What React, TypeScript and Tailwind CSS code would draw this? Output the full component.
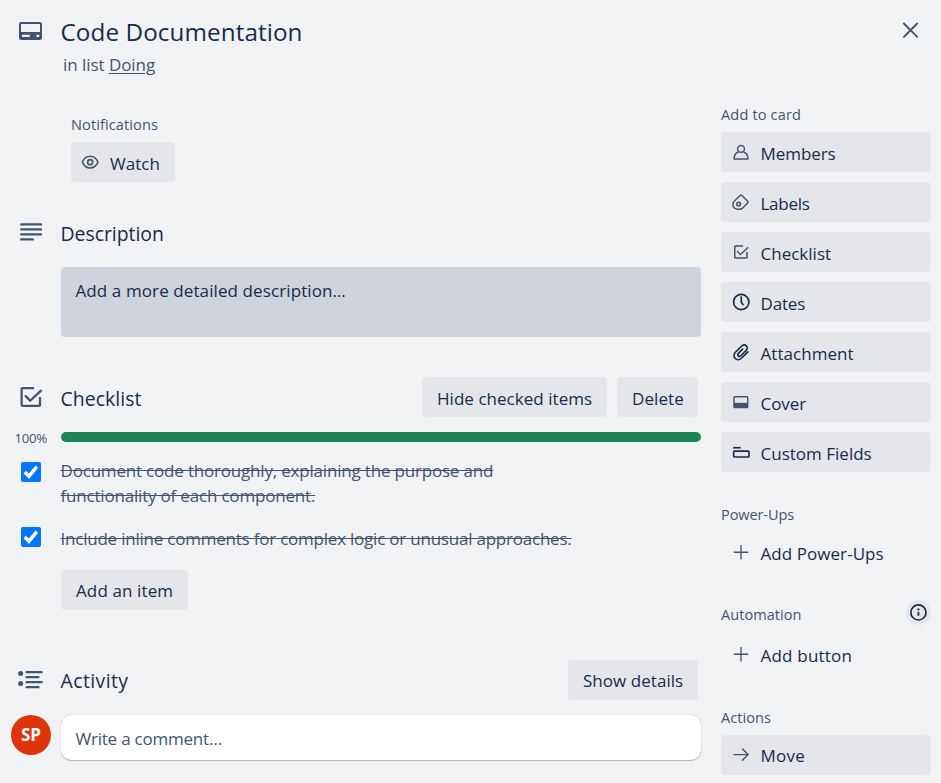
import type { ReactNode } from 'react';

const NAVY = 'text-[#172b4d]';
const SLATE = 'text-[#44546f]';

function Icon({ children, size = 'size-5', color = SLATE }: { children: ReactNode; size?: string; color?: string }) {
  return (
    <svg viewBox="0 0 24 24" fill="none" stroke="currentColor" strokeWidth="2" strokeLinecap="round" strokeLinejoin="round" className={`${size} ${color} shrink-0`}>
      {children}
    </svg>
  );
}

const CheckBoxIcon = () => (
  <g strokeWidth="1.8">
    <path d="M14.500 4.900H5.300a.8.8 0 0 0-.8.8v12.600a.8.8 0 0 0 .8.8h13.100a.8.8 0 0 0 .8-.8v-6.300" strokeLinecap="butt" />
    <path d="M7.800 11.300l3.500 3.700L20 6.900" />
  </g>
);

function Button({ label, className, spacing }: { label: string; className: string; spacing: string }) {
  return (
    <button className={`flex h-10 shrink-0 items-center rounded-[4px] bg-[#e4e6ea] pl-[15px] text-[17px] font-medium whitespace-nowrap ${spacing} ${className}`}>
      {label}
    </button>
  );
}

function SideButton({ label, icon, spacing, color, plain = false }: { label: string; icon: ReactNode; spacing: string; color?: string; plain?: boolean }) {
  return (
    <button className={`flex h-10 w-full shrink-0 items-center rounded-[4px] pl-[9.5px] ${plain ? '' : 'bg-[#e4e6ea]'}`}>
      <Icon color={color}>{icon}</Icon>
      <span className={`ml-2.5 pt-[3px] text-[17px] font-medium whitespace-nowrap ${spacing}`}>{label}</span>
    </button>
  );
}

function SideHeading({ label, spacing = '' }: { label: string; spacing?: string }) {
  return <h3 className={`h-5 text-[14.55px] leading-5 font-medium ${SLATE} ${spacing}`}>{label}</h3>;
}

function Checked() {
  return (
    <span className="flex size-5 shrink-0 items-center justify-center rounded-[2px] bg-[#0075ff]">
      <svg viewBox="0 0 20 20" className="size-5" fill="none" stroke="white" strokeWidth="3.500">
        <path d="M3.800 10l4.100 4.300L15.800 4.600" />
      </svg>
    </span>
  );
}

const PLUS = <path d="M12 3.600v17.400M3.300 12.300h17.400" strokeWidth="1.600" strokeLinecap="butt" />;

export default function App() {
  return (
    <div className={`flex h-[783px] w-[941px] overflow-hidden bg-[#f1f2f4] font-['Open_Sans',sans-serif] ${NAVY}`}>
      <main className="flex w-[721px] shrink-0 flex-col">
        <header className="flex h-[116px] pt-4">
          <div className="w-[60.5px] shrink-0 pl-4">
            <Icon size="size-[30px]">
              <rect x="3.200" y="5.600" width="16.800" height="12.800" rx="1" strokeWidth="1.600" />
              <path fill="currentColor" stroke="none" fillRule="evenodd" d="M3.200 12.800h16.800v5.600H3.200zM4.800 15v1.800h6.200V15zM16.400 15v1.800h2.200V15z" />
            </Icon>
          </div>
          <div>
            <h1 className="h-8 text-[24.25px] leading-8 font-medium tracking-[0.08px]">Code Documentation</h1>
            <p className={`mt-[5px] ml-[2.5px] h-6 text-[17px] leading-6 tracking-[-0.05px] ${SLATE}`}>
              in list <a className="underline decoration-1 underline-offset-2">Doing</a>
            </p>
          </div>
        </header>

        <section className="h-[104px] pl-[71px]">
          <h3 className={`h-[26px] text-[14.55px] leading-4 font-medium tracking-[0.1px] ${SLATE}`}>Notifications</h3>
          <button className="flex h-10 w-[104px] items-center rounded-[4px] bg-[#e4e6ea] pl-[9px]">
            <Icon>
              <path d="M2.800 12.200c2-4.500 5.400-7 9.400-7s7.400 2.500 9.400 7c-2 4.500-5.400 7-9.400 7s-7.400-2.500-9.400-7z" strokeWidth="1.800" />
              <circle cx="12.200" cy="12.200" r="3" />
            </Icon>
            <span className="ml-2.5 pt-[3px] text-[17px] font-medium tracking-[0.05px]">Watch</span>
          </button>
        </section>

        <section className="h-[157px]">
          <div className="flex h-[47px]">
            <div className="-mt-[3px] w-[60.5px] shrink-0 pl-4">
              <Icon size="size-[30px]">
                <path d="M4.200 5.900h15.800M4.200 9.900h15.800M4.200 13.900h15.800M4.200 17.900h9.200" strokeWidth="1.900" />
              </Icon>
            </div>
            <h2 className="h-7 text-[19.4px] leading-7 font-medium tracking-[-0.02px]">Description</h2>
          </div>
          <div className="ml-[61px] h-[70px] w-[640px] rounded-[4px] bg-[#cfd3db] pt-[11.5px] pl-[14.5px] text-[17px] leading-6 font-medium tracking-[0.1px]">
            Add a more detailed description…
          </div>
        </section>

        <section className="h-[283px]">
          <div className="flex h-[55px]">
            <div className="w-[60.5px] shrink-0 pt-[5px] pl-4">
              <Icon size="size-[30px]"><CheckBoxIcon /></Icon>
            </div>
            <h2 className="mt-2 h-7 flex-1 text-[19.4px] leading-7 font-medium tracking-[0.06px]">Checklist</h2>
            <div className="mr-[23px] flex gap-2.5">
              <Button label="Hide checked items" className="w-[185px] pt-[3px]" spacing="tracking-[0.04px]" />
              <Button label="Delete" className="w-[81px] pt-[3px]" spacing="tracking-[0.1px]" />
            </div>
          </div>
          <div className="flex h-[26px]">
            <span className={`w-[61px] pl-[14.5px] text-[13.3px] leading-3 tracking-[-0.35px] ${SLATE}`}>100%</span>
            <div className="h-2.5 w-[640px] rounded-full bg-[#1f845a]" />
          </div>
          <ul className={`text-[17px] leading-[25px] ${SLATE}`}>
            <li className="flex h-[68px]">
              <span className="w-[60.5px] shrink-0 pt-[4px] pl-[21px]"><Checked /></span>
              <span className="tracking-[-0.19px] whitespace-nowrap line-through">Document code thoroughly, explaining the purpose and<br />functionality of each component.</span>
            </li>
            <li className="flex h-11">
              <span className="w-[60.5px] shrink-0 pt-px pl-[21px]"><Checked /></span>
              <span className="tracking-[-0.22px] whitespace-nowrap line-through">Include inline comments for complex logic or unusual approaches.</span>
            </li>
          </ul>
          <Button label="Add an item" className="ml-[61px] w-[127px] pt-px" spacing="tracking-[0.12px]" />
        </section>

        <section>
          <div className="flex h-[54px]">
            <div className="w-[60.5px] shrink-0 pt-[5px] pl-4">
              <Icon size="size-[30px]">
                <path d="M8.500 5.700H20.500M8.500 9.700h9.400M8.500 13.700H20.500M8.500 17.700h9.400" strokeWidth="1.900" />
                <circle cx="3.700" cy="6.800" r="2" fill="currentColor" stroke="none" />
                <circle cx="3.700" cy="14.700" r="2" fill="currentColor" stroke="none" />
              </Icon>
            </div>
            <h2 className="mt-[7px] h-7 flex-1 text-[19.4px] leading-7 font-medium tracking-[0.42px]">Activity</h2>
            <Button label="Show details" className="mr-[23px] w-[130px] pt-px" spacing="tracking-[0.04px]" />
          </div>
          <div className="flex">
            <div className="w-[61px] shrink-0 pt-px pl-[11px]">
              <div className="flex size-10 items-center justify-center rounded-full bg-[#de350b] text-[17px] font-bold tracking-[-0.1px] text-white">SP</div>
            </div>
            <div className={`mt-px flex h-[45px] w-[640px] items-center rounded-[10px] bg-white pt-[3px] pl-[14.5px] text-[17px] tracking-[-0.22px] shadow-[0_1px_1px_#091e4240,0_0_1px_#091e424f] ${SLATE}`}>Write a comment…</div>
          </div>
        </section>
      </main>

      <aside className="w-[210px] shrink-0">
        <div className="flex h-[104px] justify-end pt-[18px] pr-2">
          <Icon size="size-6"><path d="M4.900 5.500l13.300 13.300M18.200 5.500L4.900 18.800" strokeWidth="1.900" /></Icon>
        </div>
        <div className="h-[400px]">
          <SideHeading label="Add to card" spacing="tracking-[0.15px]" />
          <div className="mt-2 flex flex-col gap-2.5">
            <SideButton label="Members" spacing="tracking-[-0.06px]" icon={<><circle cx="12" cy="8.300" r="4.100" strokeWidth="1.800" /><path d="M9 11.700C5.800 12.900 3.800 15.700 3.600 20.300h16.800c-.2-4.600-2.200-7.400-5.400-8.600" strokeWidth="1.800" /></>} />
            <SideButton label="Labels" spacing="tracking-[-0.26px]" icon={<><path d="M4.200 10.800L11 4.200a1.500 1.500 0 0 1 2.100 0l6.900 7a1.500 1.500 0 0 1 0 2.100L14 19.300C10.500 22 2.500 21 2.300 15.200c-.1-1.800.4-2.900 1.900-4.400z" strokeWidth="1.700" /><circle cx="9.200" cy="14.500" r="2.200" strokeWidth="1.900" /></>} />
            <SideButton label="Checklist" spacing="tracking-[0.01px]" icon={<CheckBoxIcon />} />
            <SideButton label="Dates" spacing="tracking-[-0.18px]" color={NAVY} icon={<><circle cx="12.300" cy="12" r="9.200" /><path d="M12.300 6v6l2.200 3.200" /></>} />
            <SideButton label="Attachment" spacing="tracking-[0.05px]" color={NAVY} icon={<path d="M20.300 11.800l-7.100 7.100c-3 3-6.200 3-8.200.9s-2-5.200.9-8.100l6.600-6.600c2-2 4.400-2 5.900-.5s1.500 3.800-.5 5.800l-6.100 6.100c-1 1-2.300 1-3.100.2s-.8-2.100.2-3.100l5-5" strokeWidth="2" />} />
            <SideButton label="Cover" spacing="tracking-[-0.07px]" icon={<><rect x="3.600" y="5.700" width="16.500" height="13" rx="1" strokeWidth="1.700" /><path d="M3.600 13h16.500v5.700H3.600z" fill="currentColor" stroke="none" /></>} />
            <SideButton label="Custom Fields" spacing="tracking-[0.01px]" color={NAVY} icon={<><path d="M2.600 6.900h9" strokeLinecap="butt" /><rect x="3.200" y="11" width="18.400" height="7" rx="1" /></>} />
          </div>
        </div>
        <div className="h-[100px]">
          <SideHeading label="Power-Ups" spacing="tracking-[-0.11px]" />
          <div className="mt-2"><SideButton plain label="Add Power-Ups" spacing="tracking-[0.06px]" icon={PLUS} /></div>
        </div>
        <div className="h-[103px]">
          <div className="flex h-[30px] justify-between">
            <SideHeading label="Automation" spacing="tracking-[0.04px]" />
            <span className="-mt-1 flex size-[25px] items-center justify-center rounded-full bg-[#e4e6ea]">
              <Icon color={NAVY}><circle cx="11.300" cy="11.300" r="9.100" /><path d="M11.300 10.600v4.700" strokeWidth="2.200" strokeLinecap="butt" /><circle cx="11.300" cy="7.700" r="1.300" fill="currentColor" stroke="none" /></Icon>
            </span>
          </div>
          <SideButton plain label="Add button" spacing="tracking-[0.21px]" icon={PLUS} />
        </div>
        <div>
          <SideHeading label="Actions" spacing="tracking-[0.05px]" />
          <div className="mt-2"><SideButton label="Move" spacing="mb-px tracking-[0.26px]" icon={<path d="M3.600 11.500h17M13.800 4.700l6.800 6.800-6.800 6.800" strokeWidth="1.700" />} /></div>
        </div>
      </aside>
    </div>
  );
}
